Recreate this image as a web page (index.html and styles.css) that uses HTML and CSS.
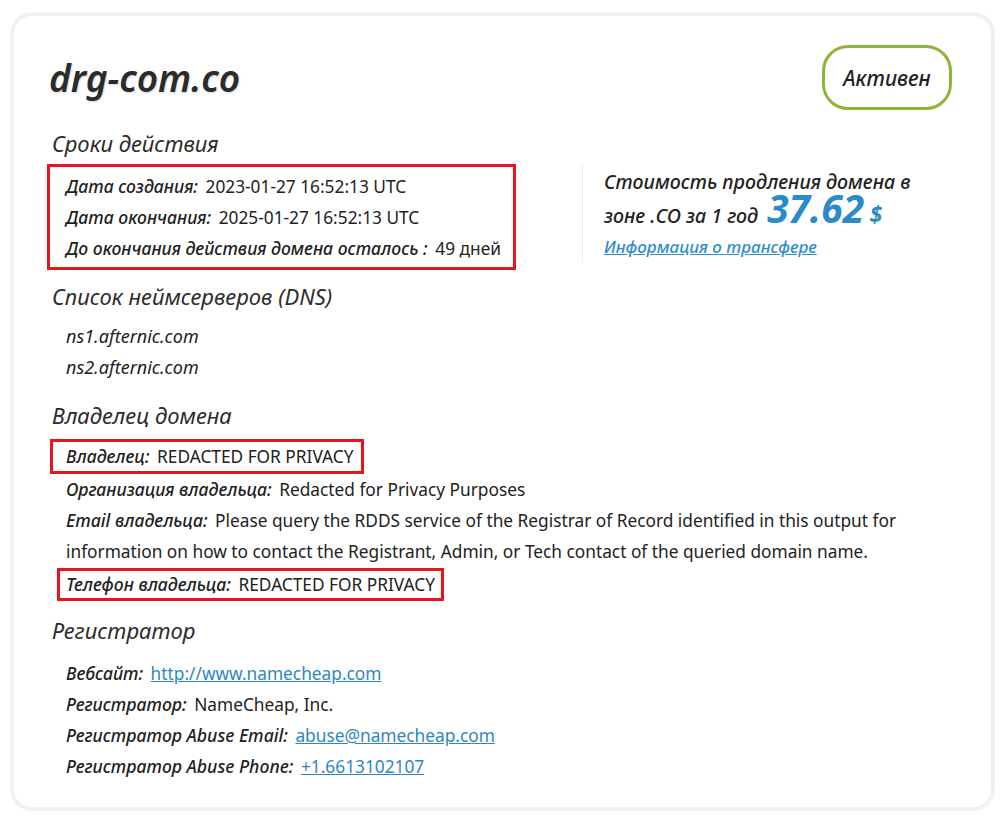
FILE: index.html
```html
<!DOCTYPE html>
<html lang="ru">
<head>
    <meta charset="UTF-8">
    <title>drg-com.co</title>
    <link rel="stylesheet" href="styles.css">
</head>
<body>

    <div class="card">
        <div class="card-head">
            <h1 class="domain">drg-com.co</h1>
            <div class="status">Активен</div>
        </div>

        <div class="top-row">
            <div class="dates">
                <h2 class="section-title first">Сроки действия</h2>
                <div class="mark mark-dates">
                    <div class="row"><span class="label">Дата создания:</span> <span class="value">2023-01-27 16:52:13 UTC</span></div>
                    <div class="row"><span class="label">Дата окончания:</span> <span class="value">2025-01-27 16:52:13 UTC</span></div>
                    <div class="row"><span class="label">До окончания действия домена осталось :</span> <span class="value">49 дней</span></div>
                </div>
            </div>

            <div class="price">
                <div class="price-text">Стоимость продления домена в<br>зоне .CO за 1 год <span class="amount">37.62</span> <span class="currency">$</span></div>
                <a class="transfer" href="#">Информация о трансфере</a>
            </div>
        </div>

        <h2 class="section-title dns">Список неймсерверов (DNS)</h2>
        <div class="rows ns">
            <div class="row"><span class="label">ns1.afternic.com</span></div>
            <div class="row"><span class="label">ns2.afternic.com</span></div>
        </div>

        <h2 class="section-title owner">Владелец домена</h2>
        <div class="mark mark-owner">
            <div class="row"><span class="label">Владелец:</span> <span class="value">REDACTED FOR PRIVACY</span></div>
        </div>
        <div class="rows">
            <div class="row"><span class="label">Организация владельца:</span> <span class="value">Redacted for Privacy Purposes</span></div>
            <div class="row"><span class="label">Email владельца:</span> <span class="value">Please query the RDDS service of the Registrar of Record identified in this output for information on how to contact the Registrant, Admin, or Tech contact of the queried domain name.</span></div>
        </div>
        <div class="mark mark-phone">
            <div class="row"><span class="label">Телефон владельца:</span> <span class="value">REDACTED FOR PRIVACY</span></div>
        </div>

        <h2 class="section-title registrar">Регистратор</h2>
        <div class="rows reg">
            <div class="row"><span class="label">Вебсайт:</span> <a class="value link" href="#">http://www.namecheap.com</a></div>
            <div class="row"><span class="label">Регистратор:</span> <span class="value">NameCheap, Inc.</span></div>
            <div class="row"><span class="label">Регистратор Abuse Email:</span> <a class="value link" href="#">abuse@namecheap.com</a></div>
            <div class="row"><span class="label">Регистратор Abuse Phone:</span> <a class="value link" href="#">+1.6613102107</a></div>
        </div>
    </div>

</body>
</html>
```

FILE: styles.css
```css
/* Whois card */
body {
    margin: 0;
    padding: 12px 12px 10px 10px;
    background: #fff;
    color: #222;
    font-family: "Noto Sans", "Open Sans", sans-serif;
}

.card {
    border: 4px solid #f1f1f1;
    border-radius: 22px;
    padding: 29px 39px 25px 36px;
}

.card-head {
    display: flex;
    justify-content: space-between;
    align-items: center;
}

.domain {
    margin: 0 0 0 -1px;
    font-size: 37px;
    font-style: italic;
    font-weight: 600;
    color: #2b2b2b;
    text-shadow: 1px 1px 2px #d6d6d6;
}

.status {
    width: 124px;
    height: 59px;
    border: 3px solid #8fb43a;
    border-radius: 26px;
    display: flex;
    align-items: center;
    justify-content: center;
    font-size: 21px;
    font-style: italic;
    font-weight: 500;
    color: #222;
}

.section-title {
    margin: 17px 0 0 2px;
    font-size: 22px;
    line-height: 30px;
    font-style: italic;
    font-weight: 400;
    color: #2c2c2c;
}

.section-title.first {
    margin-top: 18px;
}

.section-title.dns {
    margin-top: 11px;
}

.section-title.owner {
    margin-top: 17px;
}

.section-title.registrar {
    margin-top: 14px;
}

.top-row {
    display: flex;
}

.dates {
    width: 532px;
}

.price {
    margin-top: 55px;
    height: 98px;
    border-left: 1px solid #eeeeee;
    padding-left: 21px;
}

.price-text {
    margin-top: 1px;
    font-size: 19.6px;
    font-style: italic;
    font-weight: 500;
    line-height: 32px;
    color: #222;
}

.amount {
    margin-left: 4px;
    font-size: 39px;
    font-weight: 700;
    color: #2b8ac8;
    line-height: 20px;
}

.currency {
    font-size: 23px;
    font-weight: 700;
    color: #2b8ac8;
}

.transfer {
    display: block;
    margin-top: 2px;
    font-size: 17px;
    font-style: italic;
    font-weight: 500;
    color: #2f8ecc;
    line-height: 26px;
}

.rows {
    padding-left: 16px;
}

.rows.ns {
    margin-top: 10px;
}

.rows.reg {
    margin-top: 13px;
}

.row {
    line-height: 31px;
    font-size: 17.3px;
}

.label {
    font-style: italic;
    font-weight: 500;
    font-size: 17.6px;
    color: #222;
    margin-right: 3px;
}

.ns .label {
    font-size: 18px;
    font-weight: 400;
}

.value {
    font-size: 17.3px;
    color: #222;
}

.link {
    color: #2f86c3;
}

/* red highlight frames */
.mark {
    width: fit-content;
    border: 3px solid #e8141c;
}

.mark-dates {
    margin: 6px 0 0 -3px;
    padding: 4px 12px 3px 16px;
}

.mark-owner {
    margin-top: 9px;
    padding: 0 8px 0 13px;
}

.mark-owner .row {
    line-height: 29px;
}

.mark-phone {
    margin: 1px 0 0 7px;
    padding: 1px 6px 1px 6px;
}

.mark-phone .row {
    line-height: 24px;
}
```
